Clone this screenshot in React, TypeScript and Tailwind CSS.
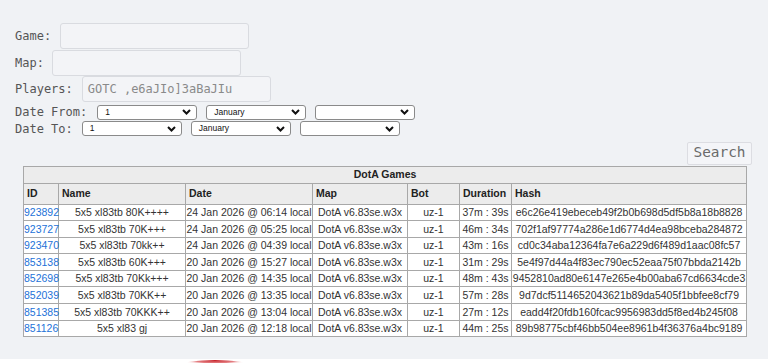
import React from "react";

const rows = [
  ["923892", "5x5 xl83tb 80K++++", "24 Jan 2026 @ 06:14 local", "37m : 39s", "e6c26e419ebeceb49f2b0b698d5df5b8a18b8828"],
  ["923727", "5x5 xl83tb 70K+++", "24 Jan 2026 @ 05:25 local", "46m : 34s", "702f1af97774a286e1d6774d4ea98bceba284872"],
  ["923470", "5x5 xl83tb 70kk++", "24 Jan 2026 @ 04:39 local", "43m : 16s", "cd0c34aba12364fa7e6a229d6f489d1aac08fc57"],
  ["853138", "5x5 xl83tb 60K+++", "20 Jan 2026 @ 15:27 local", "31m : 29s", "5e4f97d44a4f83ec790ec52eaa75f07bbda2142b"],
  ["852698", "5x5 xl83tb 70Kk+++", "20 Jan 2026 @ 14:35 local", "48m : 43s", "9452810ad80e6147e265e4b00aba67cd6634cde3"],
  ["852039", "5x5 xl83tb 70KK++", "20 Jan 2026 @ 13:35 local", "57m : 28s", "9d7dcf5114652043621b89da5405f1bbfee8cf79"],
  ["851385", "5x5 xl83tb 70KKK++", "20 Jan 2026 @ 13:04 local", "27m : 12s", "eadd4f20fdb160fcac9956983dd5f8ed4b245f08"],
  ["851126", "5x5 xl83 gj", "20 Jan 2026 @ 12:18 local", "44m : 25s", "89b98775cbf46bb504ee8961b4f36376a4bc9189"],
];

function Chevron() {
  return (
    <svg width="9" height="6" viewBox="0 0 9 6" className="shrink-0">
      <path d="M1 1 L4.5 4.5 L8 1" fill="none" stroke="#111" strokeWidth="2" />
    </svg>
  );
}

function Sel({ value }: { value: string }) {
  return (
    <div className="flex h-[15px] w-[100px] items-center justify-between rounded-[3px] border border-[#8a8a8a] bg-white pl-[7px] pr-[5px] font-['Liberation_Sans',Arial,sans-serif] text-[8.5px] leading-none text-[#111]">
      <span>{value}</span>
      <Chevron />
    </div>
  );
}

function Field({ label, value, gap }: { label: string; value?: string; gap: string }) {
  return (
    <div className="flex h-[26.5px] items-center">
      <span className="whitespace-pre">{label}</span>
      <div className={`flex h-[26px] w-[189px] items-center rounded-[3px] border border-[#d9dbe0] bg-[#f3f4f7] px-[5px] text-[#8a8a8a] ${gap}`}>
        {value}
      </div>
    </div>
  );
}

export default function App() {
  return (
    <div className="h-[363px] overflow-hidden bg-[#f0f2f5] font-['DejaVu_Sans_Mono',monospace] text-[12px] text-[#555]">
      <div className="pl-[15px] pt-[23px]">
        <Field label="Game:" gap="ml-[9px]" />
        <Field label="Map:" gap="ml-[8px]" />
        <Field label="Players:" value="GOTC ,e6aJIo]3aBaJIu" gap="ml-[9px]" />
        <div className="mt-[1px] flex h-[17px] items-center">
          <span>Date From:</span>
          <div className="ml-[10px] flex gap-[9px]">
            <Sel value="1" />
            <Sel value="January" />
            <Sel value="" />
          </div>
        </div>
        <div className="flex h-[16px] items-center">
          <span>Date To:</span>
          <div className="ml-[9px] flex gap-[9px]">
            <Sel value="1" />
            <Sel value="January" />
            <Sel value="" />
          </div>
        </div>
      </div>
      <div className="mt-[5px] flex justify-end pr-[16px]">
        <div className="flex h-[23px] w-[65px] items-center justify-center rounded-[2px] border border-[#dcdde2] bg-[#f4f5f8] text-[14.4px] text-[#6a6a6a]">
          Search
        </div>
      </div>
      <div className="ml-[23px] mt-[1px] w-[723px]">
        <table className="w-[723px] table-fixed border-collapse border border-[#9a9a9a] font-['Liberation_Sans',Arial,sans-serif] text-[10.5px] text-[#333]">
          <colgroup>
            <col className="w-[35px]" />
            <col className="w-[127px]" />
            <col className="w-[127px]" />
            <col className="w-[95px]" />
            <col className="w-[52px]" />
            <col className="w-[52px]" />
            <col className="w-[235px]" />
          </colgroup>
          <thead>
            <tr className="bg-[#ececec]">
              <th colSpan={7} className="h-[17px] border border-[#a8a8a8] p-0 text-center font-bold leading-none text-[#222]">
                DotA Games
              </th>
            </tr>
            <tr className="bg-[#ececec]">
              {["ID", "Name", "Date", "Map", "Bot", "Duration", "Hash"].map((h) => (
                <th key={h} className="h-[21px] border border-[#a8a8a8] px-[3px] py-0 text-left font-bold leading-none text-[#222]">
                  {h}
                </th>
              ))}
            </tr>
          </thead>
          <tbody>
            {rows.map((r) => (
              <tr key={r[0]} className="bg-white">
                <td className="h-[16.6px] overflow-visible whitespace-nowrap border border-[#a8a8a8] p-0 text-left leading-none text-[#1d72d8]">
                  {r[0]}
                </td>
                <td className="whitespace-nowrap border border-[#a8a8a8] p-0 text-center leading-none">{r[1]}</td>
                <td className="whitespace-nowrap border border-[#a8a8a8] p-0 text-center leading-none">{r[2]}</td>
                <td className="whitespace-nowrap border border-[#a8a8a8] p-0 text-center leading-none">DotA v6.83se.w3x</td>
                <td className="whitespace-nowrap border border-[#a8a8a8] p-0 text-center leading-none">uz-1</td>
                <td className="whitespace-nowrap border border-[#a8a8a8] p-0 text-center leading-none">{r[3]}</td>
                <td className="whitespace-nowrap border border-[#a8a8a8] p-0 text-center leading-none">{r[4]}</td>
              </tr>
            ))}
          </tbody>
        </table>
      </div>
      <div className="mt-[22px] h-[8px] bg-white">
        <svg width="768" height="8" viewBox="0 0 768 8" className="block">
          <defs>
            <radialGradient id="rg" cx="0.5" cy="0" r="0.5">
              <stop offset="0" stopColor="#c0121b" />
              <stop offset="0.6" stopColor="#d8474c" stopOpacity="0.7" />
              <stop offset="1" stopColor="#ffffff" stopOpacity="0" />
            </radialGradient>
          </defs>
          <ellipse cx="215" cy="6" rx="34" ry="5" fill="url(#rg)" />
        </svg>
      </div>
    </div>
  );
}
